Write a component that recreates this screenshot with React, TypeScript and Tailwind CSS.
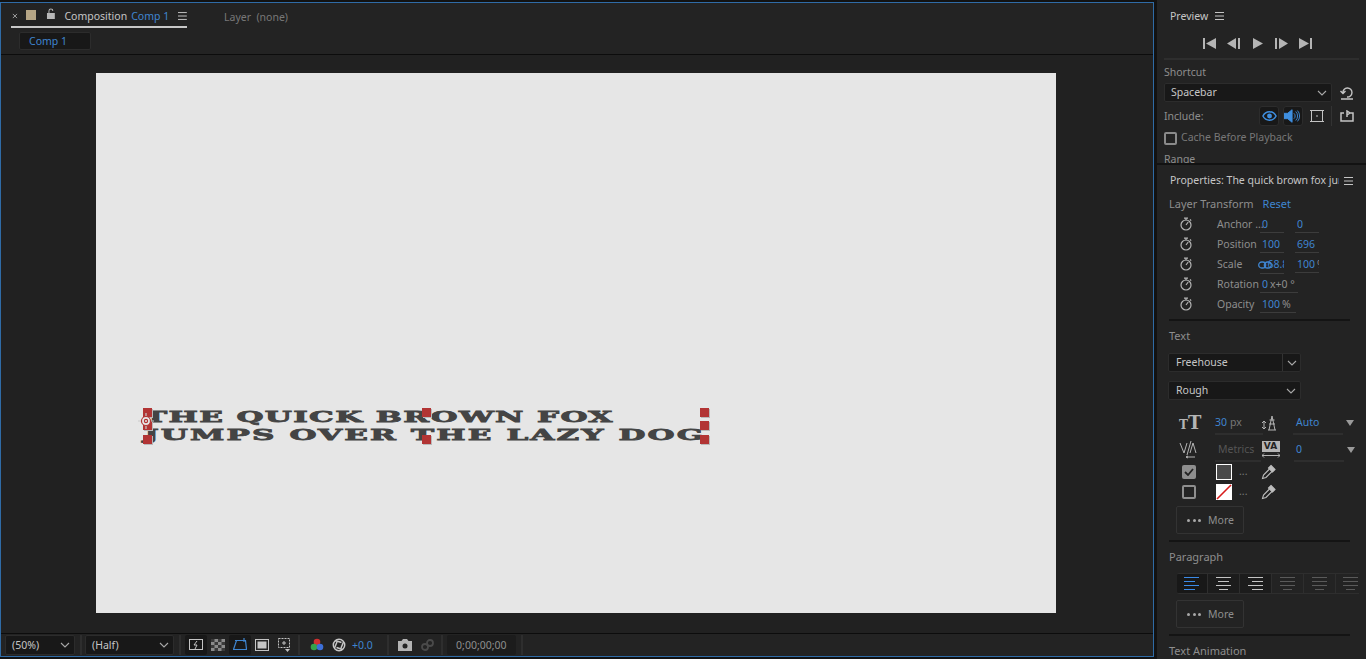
import React from "react";

const font = "font-['Noto_Sans','Open_Sans',sans-serif]";

function Sep({ className = "" }: { className?: string }) {
  return <div className={`h-[20px] w-[2px] bg-[#2e2e2e] ${className}`} />;
}

function Chevron({ className = "" }: { className?: string }) {
  return (
    <svg viewBox="0 0 10 6" className={`h-[6px] w-[10px] ${className}`} fill="none" stroke="#a8a8a8" strokeWidth="1.1">
      <path d="M1 1l4 4 4-4" />
    </svg>
  );
}

function Menu({ className = "" }: { className?: string }) {
  return (
    <svg viewBox="0 0 9 8" className={`h-[8px] w-[9px] ${className}`} fill="none" stroke="#c4c4c4" strokeWidth="1">
      <path d="M0 .5h9M0 4h9M0 7.5h9" />
    </svg>
  );
}

function Stopwatch() {
  return (
    <svg viewBox="0 0 14 14" className="h-[14px] w-[14px]" fill="none" stroke="#b4b4b4" strokeWidth="1.2">
      <circle cx="7" cy="8" r="5" />
      <path d="M5 1.2h4M7 1.2v2M7 8l2.2-3M11 2.5l1.2 1.2" />
    </svg>
  );
}

function Eyedropper() {
  return (
    <svg viewBox="0 0 16 16" className="h-[16px] w-[16px]" fill="none" stroke="#bdbdbd" strokeWidth="1.1">
      <path d="M10 1.5l4 4-2.500 2.500-4-4z" fill="#bdbdbd" />
      <path d="M8.500 5l-6 6-1 3.500 3.500-1 6-6" />
    </svg>
  );
}

function Transport({ d }: { d: string }) {
  return (
    <svg viewBox="0 0 13 11" className="h-[11px] w-[13px]" fill="#b4b4b4">
      <path d={d} />
    </svg>
  );
}

function TransformRow({ label, children }: { label: string; children: React.ReactNode }) {
  return (
    <div className="flex h-[20px] items-center">
      <div className="ml-[10px] w-[38px]"><Stopwatch /></div>
      <div className="w-[43px] whitespace-nowrap pt-[2px] text-[#8e8e8e]">{label}</div>
      {children}
    </div>
  );
}

function Field({ value, unit, width = "w-[24px]", className = "" }: { value: string; unit?: string; width?: string; className?: string }) {
  return (
    <div className={`flex h-[19px] items-center self-start overflow-hidden whitespace-nowrap border-b border-[#3c3c3c] pl-[2px] pt-[3px] text-[#3f85d0] ${width} ${className}`}>
      {value}
      {unit ? <span className="ml-[2px] text-[#8e8e8e]">{unit}</span> : null}
    </div>
  );
}

function SelectBox({ label, className = "" }: { label: React.ReactNode; className?: string }) {
  return (
    <div className={`flex h-[19px] items-center justify-between rounded-[2px] border border-[#2c2c2c] bg-[#181818] pl-[6px] pr-[4px] text-[#c6c6c6] ${className}`}>
      {label}
      <Chevron />
    </div>
  );
}

function MoreButton() {
  return (
    <div className="ml-[19px] flex h-[28px] w-[68px] items-center rounded-[2px] border border-[#333] pl-[10px] text-[#8e8e8e]">
      <span className="flex gap-[2.5px]">
        <i className="h-[3px] w-[3px] rounded-full bg-[#a8a8a8]" />
        <i className="h-[3px] w-[3px] rounded-full bg-[#a8a8a8]" />
        <i className="h-[3px] w-[3px] rounded-full bg-[#a8a8a8]" />
      </span>
      <span className="ml-[7px] pt-[2px]">More</span>
    </div>
  );
}

function AlignIcon({ rows, color }: { rows: string; color: string }) {
  return (
    <svg viewBox="0 0 16 13" className="h-[13px] w-[16px]" fill="none" stroke={color} strokeWidth="1">
      <path d={rows} />
    </svg>
  );
}

const left = "M0 .5h15M0 4.5h11M0 8.5h15M0 12.5h11";
const center = "M0 .5h15M2 4.5h11M0 8.5h15M3 12.5h9";
const right = "M0 .5h15M4 4.5h11M0 8.5h15M4 12.5h11";
const justified = "M0 .5h15M0 4.5h15M0 8.5h15M3 12.5h9";

function Handle({ className }: { className: string }) {
  return <div className={`absolute h-[9px] w-[9px] bg-[#b23434] shadow-[1px_1px_0_#b9b9b9] ${className}`} />;
}

function Composition() {
  return (
    <div className="flex h-[655px] w-[1154px] flex-col border border-[#2f6ba6] bg-[#232323] text-[10.5px]">
      <div className="flex h-[25px] items-start pl-[10px]">
        <div className="flex h-[25px] w-[176px] items-center border-b-2 border-[#c8c8c8] pt-[2px] whitespace-nowrap">
          <svg viewBox="0 0 7 7" className="ml-[1px] h-[6px] w-[6px]" fill="none" stroke="#a8a8a8" strokeWidth="1.1"><path d="M1 1l5 5M6 1L1 6" /></svg>
          <div className="mb-[2px] ml-[8px] h-[10px] w-[10px] bg-[#b5a585]" />
          <svg viewBox="0 0 10 11" className="mb-[4px] ml-[10px] h-[11px] w-[10px]" fill="#b8b8b8"><path d="M1 5h8v6H1zM2.5 5V3a2.5 2.5 0 0 1 5 0h-1a1.5 1.5 0 0 0-3 0v2z" /></svg>
          <span className="ml-[9px] pt-[2px] text-[#c6c6c6]">Composition</span>
          <span className="ml-[4px] pt-[2px] text-[#3f85d0]">Comp 1</span>
          <Menu className="ml-[9px]" />
        </div>
        <div className="ml-[37px] flex h-[25px] items-center pt-[4px] text-[#787878]">Layer&nbsp; (none)</div>
      </div>
      <div className="flex h-[27px] items-start border-b border-[#0c0c0c] pl-[18px] pt-[4px]">
        <div className="flex h-[18px] w-[72px] items-center rounded-[2px] border border-[#2c2c2c] bg-[#181818] pl-[9px] pt-[2px] text-[#3f85d0]">Comp 1</div>
      </div>
      <div className="flex h-[579px] items-start border-b border-[#0c0c0c] bg-[#212121] pl-[95px] pt-[18px]">
        <div className="relative h-[540px] w-[960px] overflow-hidden bg-[#e6e6e6]">
          <div className="absolute left-[48px] top-[335px] origin-left scale-x-[2] whitespace-nowrap font-['DejaVu_Serif',serif] text-[15.5px] font-bold leading-[18px] tracking-[0.7px] text-[#444] [-webkit-text-stroke:0.8px_#444]">
            THE QUICK BROWN FOX
          </div>
          <div className="absolute left-[48px] top-[353px] origin-left scale-x-[2] whitespace-nowrap font-['DejaVu_Serif',serif] text-[15.5px] font-bold leading-[18px] tracking-[1.08px] text-[#444] [-webkit-text-stroke:0.8px_#444]">
            JUMPS OVER THE LAZY DOG
          </div>
          <Handle className="left-[47px] top-[335px]" />
          <Handle className="left-[47px] top-[348px]" />
          <Handle className="left-[47px] top-[362px]" />
          <Handle className="left-[326px] top-[335px]" />
          <Handle className="left-[326px] top-[362px]" />
          <Handle className="left-[604px] top-[335px]" />
          <Handle className="left-[604px] top-[348px]" />
          <Handle className="left-[604px] top-[362px]" />
          <svg viewBox="0 0 16 16" className="absolute left-[42px] top-[340px] h-[16px] w-[16px]" fill="none" stroke="#b23434" strokeWidth="1.2">
            <circle cx="8" cy="8" r="4.5" fill="#e6e6e6" />
            <circle cx="8" cy="8" r="1.6" />
            <path d="M0 8h3M13 8h3M8 0v3M8 13v3" stroke="#c9c9c9" />
          </svg>
        </div>
      </div>
      <div className="flex h-[22px] items-center pl-[4px] text-[#b4b4b4]">
        <SelectBox label={<span className="pt-[2px]">(50%)</span>} className="h-[20px] w-[70px] bg-[#1d1d1d]" />
        <Sep className="ml-[5px]" />
        <SelectBox label={<span className="pt-[2px]">(Half)</span>} className="ml-[3px] h-[20px] w-[89px] bg-[#1d1d1d]" />
        <Sep className="ml-[5px]" />
        <div className="ml-[4px] flex h-[20px] w-[22px] items-center justify-center rounded-[2px] bg-[#181818]">
          <svg viewBox="0 0 14 12" className="h-[12px] w-[14px]" fill="none" stroke="#c4c4c4"><rect x=".5" y=".5" width="13" height="10" /><path d="M8 2L5 6h3l-2 4" /></svg>
        </div>
        <div className="flex h-[20px] w-[22px] items-center justify-center">
          <svg viewBox="0 0 14 12" className="h-[12px] w-[14px]"><rect width="14" height="12" fill="#8a8a8a" /><path d="M0 0h3.5v3H0zM7 0h3.5v3H7zM3.5 3H7v3H3.5zM10.5 3H14v3h-3.5zM0 6h3.5v3H0zM7 6h3.5v3H7zM3.5 9H7v3H3.5zM10.5 9H14v3h-3.5z" fill="#3a3a3a" /></svg>
        </div>
        <div className="flex h-[20px] w-[22px] items-center justify-center rounded-[2px] bg-[#181818]">
          <svg viewBox="0 0 14 14" className="h-[14px] w-[14px]" fill="none" stroke="#3f85d0" strokeWidth="1.2"><path d="M3.500 2.500h9l1 9H.5zM2 2.500h2M11 0v4M0 11.500h3" /></svg>
        </div>
        <div className="flex h-[20px] w-[22px] items-center justify-center">
          <svg viewBox="0 0 14 12" className="h-[12px] w-[14px]" fill="none" stroke="#c4c4c4"><rect x=".5" y=".5" width="13" height="11" /><rect x="3" y="3" width="8" height="6" fill="#c4c4c4" /></svg>
        </div>
        <div className="flex h-[20px] w-[22px] items-center justify-center">
          <svg viewBox="0 0 14 14" className="h-[14px] w-[14px]" fill="none" stroke="#c4c4c4"><rect x="1.500" y=".5" width="11" height="9" strokeDasharray="2 1" /><path d="M7 3v4M5 5h4" /><path d="M8 11h5l-2.500 3z" fill="#c4c4c4" stroke="none" /></svg>
        </div>
        <Sep className="ml-[3px]" />
        <div className="ml-[8px] flex h-[20px] w-[18px] items-center justify-center">
          <svg viewBox="0 0 14 14" className="h-[14px] w-[14px]"><circle cx="7" cy="4" r="3.300" fill="#d03030" /><circle cx="4" cy="9" r="3.300" fill="#35a24a" /><circle cx="10" cy="9" r="3.300" fill="#3d6fd8" /></svg>
        </div>
        <div className="ml-[4px] flex h-[20px] w-[18px] items-center justify-center">
          <svg viewBox="0 0 14 14" className="h-[14px] w-[14px]" fill="none" stroke="#c8c8c8" strokeWidth="1.500"><circle cx="7" cy="7" r="5.700" /><path d="M3 2.500l6.500 2M11.500 4L9 10M10.500 11.500L4.500 9.500M2.500 10L5 4" /></svg>
        </div>
        <span className="ml-[4px] pt-[2px] text-[#3f85d0]">+0.0</span>
        <Sep className="ml-[14px]" />
        <div className="ml-[8px] flex h-[20px] w-[16px] items-center justify-center">
          <svg viewBox="0 0 14 12" className="h-[12px] w-[14px]" fill="#b4b4b4"><path d="M0 2h3.500L5 0h4l1.500 2H14v10H0z" /><circle cx="7" cy="7" r="2.500" fill="#232323" /></svg>
        </div>
        <div className="ml-[6px] flex h-[20px] w-[16px] items-center justify-center">
          <svg viewBox="0 0 14 12" className="h-[12px] w-[14px]" fill="none" stroke="#4a4a4a" strokeWidth="1.800"><circle cx="5" cy="8" r="3" /><circle cx="10" cy="4" r="3" /></svg>
        </div>
        <Sep className="ml-[6px]" />
        <div className="ml-[4px] flex h-[20px] w-[69px] items-center justify-center rounded-[2px] bg-[#1c1c1c] pt-[2px] text-[#8e8e8e]">0;00;00;00</div>
        <Sep className="ml-[5px]" />
      </div>
    </div>
  );
}

function Preview() {
  return (
    <div className="h-[163px] overflow-hidden bg-[#232323] px-[7px] text-[10.5px]">
      <div className="flex h-[32px] items-center pl-[6px]">
        <span className="pt-[2px] text-[#c6c6c6]">Preview</span>
        <Menu className="ml-[7px]" />
      </div>
      <div className="flex h-[22px] items-center gap-[11px] pl-[39px]">
        <Transport d="M0 0h2v11H0zM13 0v11L3 5.500z" />
        <Transport d="M9 0v11L0 5.500zM11 0h2v11h-2z" />
        <Transport d="M2 0l10 5.500L2 11z" />
        <Transport d="M0 0h2v11H0zM4 0l9 5.500L4 11z" />
        <Transport d="M0 0l10 5.500L0 11zM11 0h2v11h-2z" />
      </div>
      <div className="mt-[4px] h-[2px] bg-[#2e2e2e]" />
      <div className="mt-[5px] flex h-[14px] items-center pt-[2px] text-[#8e8e8e]">Shortcut</div>
      <div className="mt-[4px] flex h-[19px] items-center">
        <SelectBox label="Spacebar" className="w-[168px]" />
        <svg viewBox="0 0 14 14" className="ml-[8px] h-[14px] w-[14px]" fill="none" stroke="#c4c4c4" strokeWidth="1.400"><path d="M3 7a4.500 4.500 0 1 1 4 4M1 13h12M.5 5L3 7.500 5.500 5" /></svg>
      </div>
      <div className="mt-[3px] flex h-[22px] items-center text-[#8e8e8e]">
        <span className="w-[95px] pt-[2px]">Include:</span>
        <div className="flex h-[20px] w-[20px] items-center justify-center rounded-[3px] border border-[#2c2c2c] bg-[#181818]">
          <svg viewBox="0 0 16 12" className="h-[12px] w-[15px] shrink-0" fill="none" stroke="#3f8fe0" strokeWidth="1.600"><path d="M1 6c3-6 11-6 14 0-3 6-11 6-14 0z" /><circle cx="8" cy="6" r="1.800" fill="#3f8fe0" /></svg>
        </div>
        <div className="ml-[4px] flex h-[20px] w-[20px] items-center justify-center rounded-[3px] border border-[#2c2c2c] bg-[#181818]">
          <svg viewBox="0 0 20 14" className="h-[14px] w-[18px] shrink-0" fill="none" stroke="#3f8fe0"><path d="M0 4h4l5-4v14l-5-4H0z" fill="#3f8fe0" /><path d="M11 4a4 4 0 0 1 0 6M13 2a7 7 0 0 1 0 10M15 1a9 9 0 0 1 0 12" /></svg>
        </div>
        <div className="ml-[4px] flex h-[20px] w-[20px] items-center justify-center">
          <svg viewBox="0 0 14 14" className="h-[14px] w-[14px]" fill="none" stroke="#c4c4c4"><rect x="1.500" y="1.500" width="11" height="11" /><path d="M0 1.500h3M11 1.500h3M0 12.500h3M11 12.500h3M7 6v2" /></svg>
        </div>
        <div className="ml-[4px] h-[20px] w-[1px] bg-[#333]" />
        <svg viewBox="0 0 14 12" className="ml-[8px] h-[12px] w-[14px]" fill="none" stroke="#c4c4c4" strokeWidth="1.500"><path d="M4 3H1v8h12V3h-3M7 7V1l3 2-3 2" /></svg>
      </div>
      <div className="mt-[3px] flex h-[16px] items-center text-[#787878]">
        <div className="h-[13px] w-[13px] rounded-[2px] border-2 border-[#8a8a8a]" />
        <span className="ml-[4px]">Cache Before Playback</span>
      </div>
      <div className="mt-[6px] leading-[15px] text-[#8e8e8e]">Range</div>
    </div>
  );
}

function Properties() {
  return (
    <div className="h-[494px] overflow-hidden bg-[#232323] text-[10.5px]">
      <div className="flex h-[31px] items-center pl-[13px]">
        <span className="w-[169px] overflow-hidden whitespace-nowrap text-[#c6c6c6]">Properties: The quick brown fox jumps</span>
        <Menu className="ml-[5px]" />
      </div>
      <div className="flex h-[16px] items-center pl-[12px] text-[11px] text-[#8e8e8e]">
        Layer Transform
        <span className="ml-[9px] text-[#3f85d0]">Reset</span>
      </div>
      <div className="mt-[2px] pl-[12px]">
        <TransformRow label="Anchor …"><Field value="0" /><Field value="0" className="ml-[11px]" /></TransformRow>
        <TransformRow label="Position"><Field value="100" /><Field value="696" className="ml-[11px]" /></TransformRow>
        <TransformRow label="Scale">
          <div className="relative flex">
            <Field value={"\u00a0\u00a068.8"} />
            <svg viewBox="0 0 14 8" className="absolute -left-[2px] top-[6px] h-[8px] w-[14px]" fill="none" stroke="#3f85d0" strokeWidth="1.300"><rect x=".7" y="1" width="7" height="6" rx="3" /><rect x="6.300" y="1" width="7" height="6" rx="3" /></svg>
          </div>
          <Field value="100" unit="%" className="ml-[11px]" />
        </TransformRow>
        <TransformRow label="Rotation"><Field value="0" unit="x+0 °" width="w-[38px]" /></TransformRow>
        <TransformRow label="Opacity"><Field value="100" unit="%" width="w-[36px]" /></TransformRow>
      </div>
      <div className="ml-[12px] mt-[5px] h-[2px] w-[181px] bg-[#141414]" />
      <div className="mt-[8px] flex h-[14px] items-center pl-[12px] text-[11px] text-[#8e8e8e]">Text</div>
      <div className="ml-[11px] mt-[10px] flex h-[19px] w-[133px] rounded-[2px] border border-[#2c2c2c] bg-[#181818]">
        <div className="flex flex-1 items-center border-r border-[#333] pl-[7px] text-[#c6c6c6]">Freehouse</div>
        <div className="flex w-[17px] items-center justify-center"><Chevron /></div>
      </div>
      <SelectBox label="Rough" className="ml-[11px] mt-[9px] w-[133px] pl-[7px]" />
      <div className="ml-[12px] mt-[11px] flex h-[24px] items-center">
        <div className="ml-[10px] w-[36px] whitespace-nowrap font-['DejaVu_Serif',serif] text-[18px] font-bold leading-none text-[#b4b4b4]"><span className="text-[12px]">T</span>T</div>
        <div className="flex h-[24px] w-[48px] items-center border-b-2 border-[#2e2e2e] pt-[2px] text-[#3f85d0]">30 <span className="ml-[3px] text-[#787878]">px</span></div>
        <svg viewBox="0 0 16 16" className="-ml-[1px] h-[16px] w-[16px]" fill="none" stroke="#b4b4b4"><path d="M2 6v8M0 8l2-2 2 2M0 12l2 2 2-2M10 1l-3 14M10 1l3 14M7.500 5h5M7 9h6M6 15h8" /></svg>
        <div className="ml-[15px] flex h-[24px] w-[50px] items-center border-b-2 border-[#2e2e2e] pl-[3px] pt-[2px] text-[#3f85d0]">Auto</div>
        <div className="ml-[3px] h-0 w-0 border-x-[4px] border-t-[6px] border-x-transparent border-t-[#9a9a9a]" />
      </div>
      <div className="ml-[12px] mt-[3px] flex h-[24px] items-center">
        <svg viewBox="0 0 18 18" className="ml-[10px] h-[18px] w-[18px]" fill="none" stroke="#b4b4b4"><path d="M1 2l4 10 3-10M8 14L12 0M11 12l3-10 3 10M7 16h9M9 15l-2 1 2 1" /></svg>
        <div className="ml-[18px] flex h-[24px] w-[46px] items-center border-b-2 border-[#2e2e2e] pl-[3px] pt-[2px] text-[#555]">Metrics</div>
        <div className="flex h-[18px] w-[19px] flex-col items-center">
          <div className="h-[11px] w-[18px] bg-[#b4b4b4] text-center font-['DejaVu_Sans',sans-serif] text-[9px] font-bold leading-[11px] text-[#232323]">VA</div>
          <svg viewBox="0 0 18 5" className="mt-[1px] h-[5px] w-[18px]" fill="none" stroke="#b4b4b4"><path d="M0 2.500h18M2 .5L0 2.500l2 2M16 .5l2 2-2 2" /></svg>
        </div>
        <div className="ml-[14px] flex h-[24px] w-[50px] items-center border-b-2 border-[#2e2e2e] pl-[2px] pt-[2px] text-[#3f85d0]">0</div>
        <div className="ml-[3px] h-0 w-0 border-x-[4px] border-t-[6px] border-x-transparent border-t-[#9a9a9a]" />
      </div>
      <div className="ml-[12px] flex h-[20px] items-center">
        <div className="ml-[13px] flex h-[14px] w-[14px] items-center justify-center rounded-[2px] bg-[#8e8e8e]">
          <svg viewBox="0 0 10 8" className="h-[8px] w-[10px]" fill="none" stroke="#232323" strokeWidth="1.800"><path d="M1 4l3 3 5-6" /></svg>
        </div>
        <div className="ml-[20px] h-[16px] w-[16px] border border-white bg-[#4a4a4a]" />
        <span className="ml-[7px] text-[#787878]">...</span>
        <div className="ml-[14px]"><Eyedropper /></div>
      </div>
      <div className="ml-[12px] flex h-[20px] items-center">
        <div className="ml-[13px] h-[14px] w-[14px] rounded-[2px] border-2 border-[#8e8e8e]" />
        <svg viewBox="0 0 16 16" className="ml-[20px] h-[16px] w-[16px]"><rect width="16" height="16" fill="#fff" /><path d="M1 15L15 1" stroke="#d81c1c" strokeWidth="1.600" /></svg>
        <span className="ml-[7px] text-[#787878]">...</span>
        <div className="ml-[14px]"><Eyedropper /></div>
      </div>
      <div className="mt-[4px]"><MoreButton /></div>
      <div className="ml-[12px] mt-[6px] h-[2px] w-[181px] bg-[#141414]" />
      <div className="mt-[8px] flex h-[14px] items-center pl-[12px] text-[11px] text-[#8e8e8e]">Paragraph</div>
      <div className="ml-[20px] mt-[9px] flex h-[21px] w-[182px] overflow-hidden rounded-l-[2px] border-y border-[#2e2e2e]">
        <div className="flex w-[31px] shrink-0 items-center justify-center border-r border-[#2e2e2e] bg-[#181818]"><AlignIcon rows={left} color="#3b8ae6" /></div>
        <div className="flex w-[32px] shrink-0 items-center justify-center border-r border-[#2e2e2e] bg-[#1c1c1c]"><AlignIcon rows={center} color="#c4c4c4" /></div>
        <div className="flex w-[32px] shrink-0 items-center justify-center border-r border-[#2e2e2e] bg-[#1c1c1c]"><AlignIcon rows={right} color="#c4c4c4" /></div>
        <div className="flex w-[32px] shrink-0 items-center justify-center border-r border-[#2e2e2e]"><AlignIcon rows={justified} color="#5a5a5a" /></div>
        <div className="flex w-[32px] shrink-0 items-center justify-center border-r border-[#2e2e2e]"><AlignIcon rows={justified} color="#5a5a5a" /></div>
        <div className="flex w-[23px] shrink-0 items-center justify-end"><AlignIcon rows={justified} color="#5a5a5a" /></div>
      </div>
      <div className="mt-[6px]"><MoreButton /></div>
      <div className="ml-[12px] mt-[6px] h-[2px] w-[181px] bg-[#141414]" />
      <div className="mt-[8px] flex h-[14px] items-center pl-[12px] text-[11px] text-[#8e8e8e]">Text Animation</div>
    </div>
  );
}

export default function App() {
  return (
    <div className={`flex h-[659px] w-[1366px] overflow-hidden bg-[#121212] ${font}`}>
      <div className="mt-[2px]"><Composition /></div>
      <div className="ml-[3px] flex w-[209px] flex-col gap-[2px]">
        <Preview />
        <Properties />
      </div>
    </div>
  );
}
